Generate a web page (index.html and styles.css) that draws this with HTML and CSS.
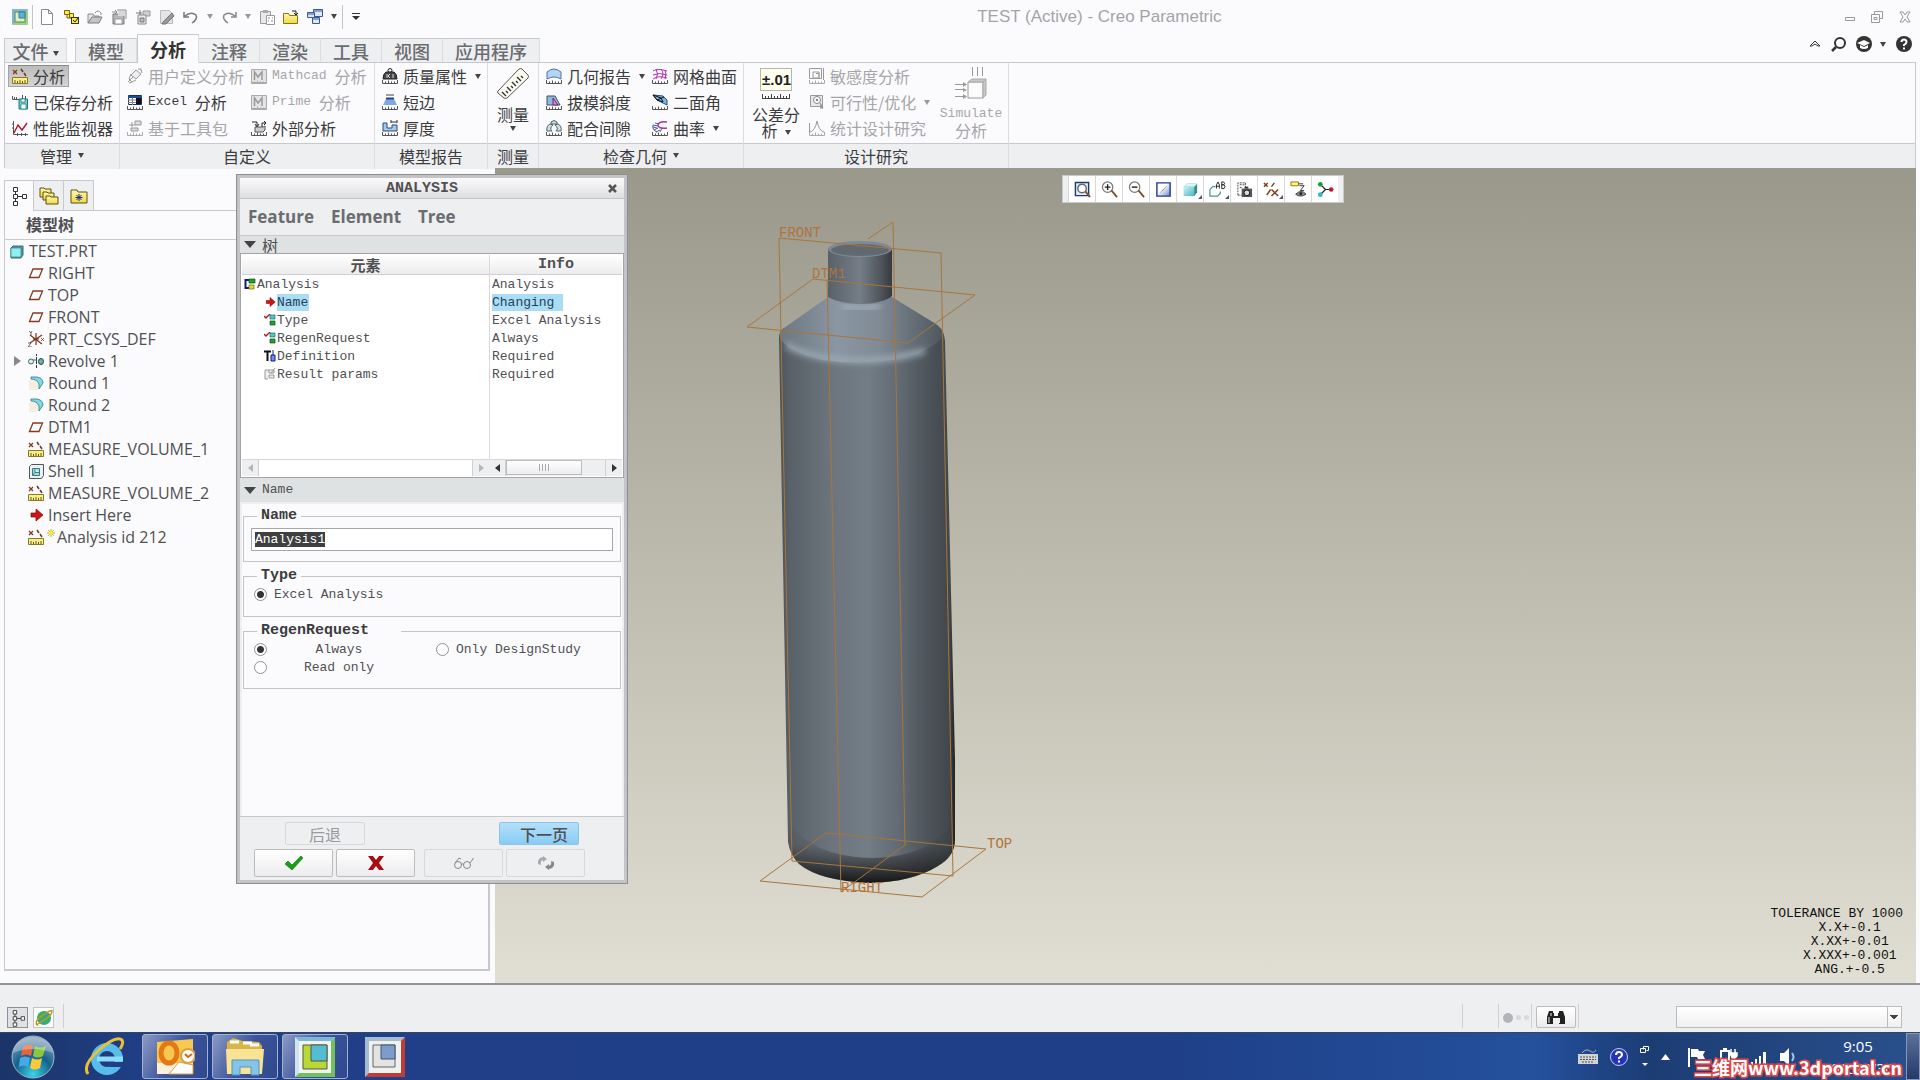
FILE: index.html
```html
<!DOCTYPE html>
<html lang="zh-CN">
<head>
    <meta charset="UTF-8">
    <meta name="viewport" content="width=device-width, initial-scale=1.0">
    <title>TEST (Active) - Creo Parametric</title>
    <link rel="stylesheet" href="styles.css">
</head>
<body>

    <!-- icons -->
    <svg class="sprite" aria-hidden="true">
        <defs>
            <linearGradient id="g-cyan" x1="0" y1="0" x2="1" y2="1"><stop offset="0" stop-color="#c8f4f8"/><stop offset="1" stop-color="#4fb4c0"/></linearGradient>
            <linearGradient id="g-folder" x1="0" y1="0" x2="0" y2="1"><stop offset="0" stop-color="#fff7b0"/><stop offset="1" stop-color="#f0d84c"/></linearGradient>
            <linearGradient id="g-doc" x1="0" y1="0" x2="1" y2="1"><stop offset="0.4" stop-color="#fff"/><stop offset="1" stop-color="#6c86c8"/></linearGradient>
        </defs>
        <symbol id="ticks" viewBox="0 0 16 16"><path d="M.5 12v3.500h15V12M3.500 13.500v2M6.500 12.500v3M9.500 13.500v2M12.500 13.500v2" fill="none" stroke="currentColor"/></symbol>
        <symbol id="i-app" viewBox="0 0 16 16"><rect width="16" height="16" rx="1" fill="#9ccf8c"/><path d="M0 0h16L0 16z" fill="#7fb6dc"/><rect x="3" y="3" width="10" height="10" fill="#dff0c0" stroke="#5c8a4c"/><path d="M7 3h6v6H7z" fill="#58b4d4" stroke="#3c7c94"/></symbol>
        <symbol id="i-new" viewBox="0 0 16 16"><path d="M2.500.5h7l4 4v11h-11zM9.500.5v4h4" fill="#fff" stroke="#8a8a8a"/></symbol>
        <symbol id="i-opensel" viewBox="0 0 16 16"><path d="M1.500 1.500h5v4h-5zM4 5.500V9h4" fill="#ffec4c" stroke="#786400"/><path d="M6.500 4.500h4v4h-4z" fill="#ffec4c" stroke="#786400"/><rect x="8.500" y="8.500" width="7" height="6" fill="#ffe74a" stroke="#333"/><path d="M10 11l2 2 3-4" fill="none" stroke="#222"/></symbol>
        <symbol id="i-open" viewBox="0 0 16 16"><path d="M1 14V5h5l1 2h5v2" fill="#e4e4e4" stroke="#8c8c8c"/><path d="M1 14l4-6h10l-3 6z" fill="#c4c4c4" stroke="#7c7c7c"/><path d="M8 4q3-4 6 0v2" fill="none" stroke="#8c8c8c"/></symbol>
        <symbol id="i-save" viewBox="0 0 16 16"><path d="M2 5h11v10H2z" fill="#b8b8b8" stroke="#777"/><path d="M4 10h7v5H4z" fill="#fff" stroke="#999"/><path d="M6 1h9v9M1 3h5M4 1l2 2-2 2" fill="none" stroke="#888"/><path d="M7 2h7v5H7z" fill="#d8d8d8"/></symbol>
        <symbol id="i-saveas" viewBox="0 0 16 16"><path d="M8 2h7v5H8z" fill="#d0d0d0" stroke="#999"/><path d="M3 6h8v9H3z" fill="#ececec" stroke="#888"/><path d="M5 9h4v4H5zM1 4h6M5 1v5" fill="#bbb" stroke="#777"/></symbol>
        <symbol id="i-edit" viewBox="0 0 16 16"><path d="M1.500 1.500h9l3 3v10h-12z" fill="#e4e4e4" stroke="#bbb"/><path d="M4 13L13 4l2 3-8 8H3z" fill="#999" stroke="#777"/></symbol>
        <symbol id="i-undo" viewBox="0 0 16 16"><path d="M2 7q6-5 11-1 2 4-4 8M1 3v5h5" fill="none" stroke="#777" stroke-width="1.500"/></symbol>
        <symbol id="i-redo" viewBox="0 0 16 16"><path d="M14 7Q8 2 3 6q-2 4 4 8M15 3v5h-5" fill="none" stroke="#888" stroke-width="1.500"/></symbol>
        <symbol id="i-paste" viewBox="0 0 16 16"><path d="M1.500 2.500h10v12h-10z" fill="#e8e8e8" stroke="#999"/><path d="M4 1h5v3H4z" fill="#aaa"/><path d="M7.500 6.500h8v9h-8z" fill="#fff" stroke="#999"/><path d="M9 9h2m2 0h1m-5 3h1m2 0h2" stroke="#888"/></symbol>
        <symbol id="i-folder" viewBox="0 0 16 16"><path d="M.5 14.500v-10h5l1 2h8v8z" fill="url(#g-folder)" stroke="#8a7600"/><path d="M9 2h4v3M11 4l2 2 2-2" fill="none" stroke="#222"/></symbol>
        <symbol id="i-windows" viewBox="0 0 16 16"><g fill="#dfe8f8" stroke="#345a9a"><path d="M6.500.5h9v7h-9z"/><path d="M.5 3.500h7v5h-7z"/><path d="M5.500 8.500h7v6h-7z"/></g><path d="M6 2h9M1 5h6M6 10h6" stroke="#345a9a"/></symbol>
        <symbol id="i-analysis" viewBox="0 0 16 16"><path d="M1 2l4 4M5 2L1 6" stroke="#8c3818" stroke-width="1.300"/><path d="M9 1l2 3M12 5l2 3" stroke="#6b3a1c" stroke-width="1.500"/><path d="M.5 9.500h15v6H.5z" fill="#f6ee8c" stroke="#8a7a20"/><path d="M3 15v-3M5.500 15v-2M8 15v-3M10.500 15v-2M13 15v-3" stroke="#6b5e14"/></symbol>
        <symbol id="i-saved" viewBox="0 0 16 16"><path d="M.5 2v3.500h7M2.500 3v2M4.500 3v2M10.500 1v4M13.500 2v3" fill="none" stroke="#555"/><path d="M7 5h8.500v10H7z" fill="#6cd0c8" stroke="#1c7a78"/><path d="M9 10h5v5H9zM9 5h4v3H9z" fill="#fff" stroke="#1c7a78" stroke-width=".7"/></symbol>
        <symbol id="i-monitor" viewBox="0 0 16 16"><path d="M1.500 1v13.500H16M0 4h2M0 8h2M5.500 13v3M9.500 13v3M13.500 13v3" fill="none" stroke="#555"/><path d="M2 13L6 5l4 5 5-7" fill="none" stroke="#b4142c" stroke-width="1.400"/></symbol>
        <symbol id="i-userdef" viewBox="0 0 16 16"><path d="M4 7l5-5 5 4-5 5zM11 1h3l1 4" fill="#eee" stroke="#999"/><path d="M4 6l-2 5 3 3 4-2M1 14l5-5M2 15l3-1" fill="none" stroke="#999"/></symbol>
        <symbol id="i-excel" viewBox="0 0 16 16"><path d="M1.500 1.500h13v9h-13z" fill="#fff" stroke="#1c2c54"/><path d="M1 2h14v2H1z" fill="#1c4c9c"/><path d="M1 6h8M1 8.500h8M5.500 4v7" stroke="#888"/><path d="M9 4h5v6H9z" fill="#111"/><use href="#ticks"/></symbol>
        <symbol id="i-toolkit" viewBox="0 0 16 16"><path d="M2 5h6M5 2v5M8 1h6v4H8zM4 8h7v3H4z" fill="#ddd" stroke="#999"/><use href="#ticks"/></symbol>
        <symbol id="i-mathcad" viewBox="0 0 16 16"><path d="M.5 1.500h15v13H.5z" fill="#e4e4e4" stroke="#aaa"/><path d="M3.500 12V4L7 9l4-5v8" fill="none" stroke="#999" stroke-width="1.500"/><use href="#ticks"/></symbol>
        <symbol id="i-external" viewBox="0 0 16 16"><path d="M1 2h5v4M4 4l2 3 2-3M11 7V3h4M13 1l2 2-2 2" fill="none" stroke="#222"/><path d="M4 7h8l2-1v4l-2 2H4z" fill="#ccc" stroke="#555"/><use href="#ticks"/></symbol>
        <symbol id="i-mass" viewBox="0 0 16 16"><circle cx="8" cy="2.500" r="2" fill="none" stroke="#222"/><path d="M4 4h8q3 2 3 7H1q0-5 3-7z" fill="#444" stroke="#222"/><path d="M5 6v4M8 6L6 8l2 2M11 6v4" stroke="#ddd" fill="none"/><use href="#ticks"/></symbol>
        <symbol id="i-shortedge" viewBox="0 0 16 16"><path d="M4 5h8l3 6H1z" fill="#7ea8dc"/><path d="M4 4.500h8" stroke="#2244a4" stroke-width="2"/><path d="M4 1h8" stroke="#444"/><use href="#ticks"/></symbol>
        <symbol id="i-thick" viewBox="0 0 16 16"><path d="M1 3h4v5h5V5h5v6H1z" fill="#a8c8e8" stroke="#2c4a7c"/><path d="M9 2h6M9 0v3M15 0v3" stroke="#333"/><use href="#ticks"/></symbol>
        <symbol id="i-measure" viewBox="0 0 32 32"><path d="M1 24L22 2q2-1 3 0l6 6q1 2 0 3L10 31q-2 1-3 0l-6-5q-1-1 0-2z" fill="#fbfbf2" stroke="#555"/><path d="M9 29l-4-4M11 26l-2-2M14 24l-4-4M16 21l-2-2M19 19l-4-4M21 16l-2-2M24 14l-4-4M26 11l-2-2" stroke="#333" stroke-width="1.400"/></symbol>
        <symbol id="i-georeport" viewBox="0 0 16 16"><path d="M1 11V4q7-6 14 0v7q-7-4-14 0z" fill="#b4d4f4" stroke="#5470a4"/><use href="#ticks"/></symbol>
        <symbol id="i-draft" viewBox="0 0 16 16"><path d="M1 2h8l5 9H1z" fill="#94b8dc" stroke="#34507c"/><path d="M7 4l5 7H7z" fill="#e87ad0" stroke="#702a64"/><use href="#ticks"/></symbol>
        <symbol id="i-clear" viewBox="0 0 16 16"><path d="M5 2q3-3 6 0v2H5zM4 4q-4 2-3 7h5q-3-3 1-6zM12 4q4 2 3 7h-5q3-3-1-6z" fill="#cfe0e4" stroke="#4c6468"/><use href="#ticks"/></symbol>
        <symbol id="i-mesh" viewBox="0 0 16 16"><path d="M1 3q5-3 14 0M1 7q6-3 14 0M1 11q5-4 14-1M4 1q3 5 0 10M9 1q4 5 0 10M13 2q2 4 0 9" fill="none" stroke="#b030b0"/><use href="#ticks"/></symbol>
        <symbol id="i-dihedral" viewBox="0 0 16 16"><path d="M1 1l10 1 4 4v5L5 6z" fill="#7cb4e4" stroke="#2c4c7c"/><path d="M1 1l8 3 2 4-6-2zM5 6l7-3" stroke="#111" fill="none"/><use href="#ticks"/></symbol>
        <symbol id="i-curv" viewBox="0 0 16 16"><path d="M15 2q-8-1-9 3 0 4 9 3" fill="none" stroke="#b030a0" stroke-width="1.400"/><path d="M1 5l5 1M2 10l4-2M4 12l4-2M3 3l4 1M8 12l2-4M1 7l4 1M1 5q-1 5 4 7" fill="none" stroke="#4c5c94"/><use href="#ticks"/></symbol>
        <symbol id="i-sens" viewBox="0 0 16 16"><path d="M.5.5h12v10H.5zM4 4h6v6H4zM7 5.500h3v4M14.500 0v12" fill="none" stroke="#999"/><use href="#ticks"/></symbol>
        <symbol id="i-feas" viewBox="0 0 16 16"><path d="M1.500 1.500h12v11h-12z" fill="#e8e8e8" stroke="#999"/><circle cx="8" cy="6" r="3.500" fill="#fff" stroke="#888"/><circle cx="8" cy="6" r="1.300" fill="#888"/><path d="M11 9l3 5h-3" stroke="#888" fill="#aaa"/></symbol>
        <symbol id="i-stat" viewBox="0 0 16 16"><path d="M1 12Q6 11 8 1q2 10 7 11M.5 3v12" fill="none" stroke="#999"/><use href="#ticks"/></symbol>
        <symbol id="i-sim" viewBox="0 0 32 32"><path d="M13 15h15v16H13z" fill="#fbfbfb" stroke="#999"/><path d="M13 15l4-3h14l-3 3zM28 15l3-3v16l-3 3z" fill="#c8c8c8" stroke="#aaa"/><path d="M17.500 0v9M22.500 0v9M27.500 0v9M0 17.500h9M0 22.500h9M0 29.500h9" stroke="#999"/><path d="M8 15l4 2.500L8 20zM8 21l4 2-4 2zM8 27l4 2.500L8 32z" fill="#999"/></symbol>

        <symbol id="i-tree" viewBox="0 0 16 20"><path d="M2.500 1.500h4v4h-4zM2.500 8.500h4v4h-4zM2.500 15.500h4v4h-4zM11.500 8.500h4v4h-4zM4.500 5.500v3M4.500 12.500v3M6.500 10.500h5" fill="#fff" stroke="#333"/></symbol>
        <symbol id="i-folders" viewBox="0 0 20 20"><g fill="url(#g-folder)" stroke="#5c5410"><path d="M1 11V2h4l1 1h6v8z"/><path d="M4 14V6h4l1 1h6v7z"/><path d="M7 18V10h4l1 1h7v7z"/></g></symbol>
        <symbol id="i-favs" viewBox="0 0 20 20"><path d="M2 17V4h6l1 2h9v11z" fill="url(#g-folder)" stroke="#5c5410"/><path d="M10 8v7M6.500 11.500h7M7.500 9l5 5M12.500 9l-5 5" stroke="#142a6c"/></symbol>
        <symbol id="i-part" viewBox="0 0 16 16"><path d="M2 5l2-2h10v9l-2 3H2z" fill="#4f9aa4" stroke="#3c6c74"/><path d="M2 5h10v9H2z" fill="#8ff0f4" stroke="#3c7c84" stroke-width=".7"/></symbol>
        <symbol id="i-plane" viewBox="0 0 16 16"><path d="M1.500 12.500L5 4h9.500L11 12.500z" fill="none" stroke="#843c20" stroke-width="1.300"/></symbol>
        <symbol id="i-csys" viewBox="0 0 16 16"><path d="M8 2v12M2 4l12 9M2 12l12-8M5 8h6" stroke="#7c3418" stroke-width="1.200"/><path d="M1 0l2 2 1-2M3 2v2M13 7l3 3M16 7l-3 3M0 12h3l-3 4h4" fill="none" stroke="#444" stroke-width=".8"/></symbol>
        <symbol id="i-revolve" viewBox="0 0 16 16"><path d="M8.500 1v2M8.500 4v7M8.500 12v3" stroke="#333"/><circle cx="3" cy="8.500" r="2.500" fill="#d4f0f0" stroke="#466"/><ellipse cx="13" cy="8.500" rx="2.500" ry="3" fill="#6cb4b4" stroke="#244"/><path d="M5 7h4" stroke="#466"/></symbol>
        <symbol id="i-round" viewBox="0 0 16 16"><path d="M1 5h9v10H1z" fill="#f4efe2"/><path d="M3 2h6q6 1 6 6l-4 6v-5Q9 4 3 4z" fill="#7cdce4" stroke="#4c8c94"/></symbol>
        <symbol id="i-shell" viewBox="0 0 16 16"><path d="M1.500 3.500l2-2h12v11l-2 3h-12z" fill="#e8f4f4" stroke="#555"/><path d="M4.500 5.500h7v7h-7zM7 5.500v4h4.500M4.500 12.500L7 9.500" fill="#9ce0e4" stroke="#46787c"/></symbol>
        <symbol id="i-insert" viewBox="0 0 16 16"><path d="M3 6h5V2l7 6-7 6v-4H3z" fill="#d01414" stroke="#7c0808" stroke-width=".7"/></symbol>
        <symbol id="i-star" viewBox="0 0 10 10"><path d="M5 0v10M0 5h10M1.500 1.500l7 7M8.500 1.500l-7 7" stroke="#a09a10"/><circle cx="5" cy="5" r="2.500" fill="#ffee20"/></symbol>

        <symbol id="i-el-root" viewBox="0 0 12 12"><path d="M5 2H1.500v8H5" fill="none" stroke="#111a70" stroke-width="2"/><path d="M5 1h6v4H5z" fill="#20a030" stroke="#0c5018" stroke-width=".7"/><path d="M5 7h5v4H5z" fill="#e8dc20" stroke="#6c6410" stroke-width=".7"/></symbol>
        <symbol id="i-el-ok" viewBox="0 0 12 12"><path d="M0 2l2 2 4-4" fill="none" stroke="#a02020" stroke-width="1.400"/><path d="M6 1h5v4H6z" fill="#50c8c8" stroke="#107070" stroke-width=".7"/><path d="M6 7h5v4H6z" fill="#20a030" stroke="#0c5018" stroke-width=".7"/></symbol>
        <symbol id="i-el-def" viewBox="0 0 12 12"><path d="M0 1.500h7M3.500 1v10" stroke="#111" stroke-width="2" fill="none"/><path d="M7 5h4v6H7zM9 0v5" fill="#7090e8" stroke="#101c8c"/></symbol>
        <symbol id="i-el-res" viewBox="0 0 12 12"><path d="M5 2H1v9h3M5 2h5v3H5zM5 7h5v3H5zM7 5l4-5" fill="#eee" stroke="#999"/></symbol>
        <symbol id="i-check" viewBox="0 0 18 14"><path d="M0 8l3-3 4 4 9-9 2 2L7 14z" fill="#16a016" stroke="#0c6c10" stroke-width=".6"/></symbol>
        <symbol id="i-cross" viewBox="0 0 18 14"><path d="M1 0h5l3 4 3-4h5l-5 7 5 7h-5l-3-4-3 4H1l5-7z" fill="#a80c14"/></symbol>
        <symbol id="i-glasses" viewBox="0 0 20 12"><g fill="none" stroke="#888"><circle cx="4" cy="8" r="3.500"/><circle cx="13" cy="8" r="3.500"/><path d="M7.500 7h2M1 6l4-5 2 1M16 6l3-4v-1"/></g></symbol>
        <symbol id="i-cycle" viewBox="0 0 18 14"><path d="M1 8Q0 2 6 1V0l4 3-4 3V4Q3 5 4 9z" fill="#aaa"/><path d="M17 6q1 6-5 7v1l-4-3 4-3v2q3-1 2-5z" fill="#888"/></symbol>

        <symbol id="v-refit" viewBox="0 0 18 18"><path d="M1.500 1.500h14v14h-14z" fill="#e4ecf8" stroke="#1c3c74" stroke-width="1.500"/><circle cx="8.500" cy="8" r="4.500" fill="#fff" stroke="#666" stroke-width="1.500"/><path d="M12 11l5 6" stroke="#7c5030" stroke-width="2"/></symbol>
        <symbol id="v-in" viewBox="0 0 18 18"><circle cx="7" cy="6.500" r="5.500" fill="#fff" stroke="#777" stroke-width="1.300"/><path d="M4 6.500h6M7 3.500v6" stroke="#222" stroke-width="1.500"/><path d="M11 10l6 7" stroke="#7c5030" stroke-width="2"/></symbol>
        <symbol id="v-out" viewBox="0 0 18 18"><circle cx="7" cy="6.500" r="5.500" fill="#fff" stroke="#777" stroke-width="1.300"/><path d="M4 6.500h6" stroke="#222" stroke-width="1.500"/><path d="M11 10l6 7" stroke="#7c5030" stroke-width="2"/></symbol>
        <symbol id="v-repaint" viewBox="0 0 18 18"><path d="M2 2h14v14H2z" fill="url(#g-doc)" stroke="#1c3c8c" stroke-width="1.500"/><path d="M6 12l6-6" stroke="#446" stroke-dasharray="1 1"/></symbol>
        <symbol id="v-shade" viewBox="0 0 18 18"><path d="M2 6l3-3h11v9l-3 4H2z" fill="#3c8c94"/><path d="M2 6h11v10H2z" fill="url(#g-cyan)"/><path d="M2 6l3-3h11l-3 3z" fill="#d4f8fa"/></symbol>
        <symbol id="v-views" viewBox="0 0 18 18"><path d="M1 9l3-3h3M1 9v7h8l3-3v-2" fill="none" stroke="#4c9494" stroke-width="1.300"/><path d="M8 8V4l1.500-3L11 4v4M8 5.500h3M13.500 8V1h2q2 1.500 0 3h-2 2.500q2 2 0 4z" fill="none" stroke="#222"/></symbol>
        <symbol id="v-manager" viewBox="0 0 18 18"><path d="M2 15V2h8v5M4 4h5M4 7h3M2 15h4" stroke="#444" stroke-dasharray="2 1" fill="none"/><path d="M6 8h11v9H6z" fill="#555"/><path d="M9 6h4v2H9z" fill="#333"/><circle cx="11.500" cy="12.500" r="3" fill="#ddd" stroke="#111"/></symbol>
        <symbol id="v-datum" viewBox="0 0 18 18"><path d="M1 2l4 4M5 2L1 6M9 9l7 7M16 9l-7 7M4 15l4-6M9 6l3-4" stroke="#7c3c1c" stroke-width="1.500"/></symbol>
        <symbol id="v-annot" viewBox="0 0 18 18"><path d="M1 1h8v4H1z" fill="#fff47a" stroke="#887a10"/><path d="M9 3h5M10 5h5l-4 5h4" stroke="#333" fill="none"/><path d="M6 14q6-6 11 0-6 4-11 0z" fill="#888" stroke="#444"/><circle cx="11.500" cy="13.500" r="1.500" fill="#222"/></symbol>
        <symbol id="v-spin" viewBox="0 0 18 18"><path d="M3 3l6 6-5 5M9 9h5" stroke="#222" stroke-width="1.300" fill="none"/><circle cx="3.500" cy="3.500" r="2.500" fill="#1c9c38"/><circle cx="3.500" cy="14.500" r="2.500" fill="#38b4c4"/><circle cx="15" cy="9" r="2.500" fill="#c41830"/></symbol>
    </svg>

    <header class="titlebar">
        <div class="quick-access">
            <svg class="icon app-icon"><use href="#i-app"/></svg>
            <button class="quick first" title="新建"><svg class="icon"><use href="#i-new"/></svg></button>
            <button class="quick" title="选择性打开"><svg class="icon"><use href="#i-opensel"/></svg></button>
            <button class="quick" title="打开"><svg class="icon"><use href="#i-open"/></svg></button>
            <button class="quick" title="保存"><svg class="icon"><use href="#i-save"/></svg></button>
            <button class="quick" title="另存为"><svg class="icon"><use href="#i-saveas"/></svg></button>
            <button class="quick" title="编辑"><svg class="icon"><use href="#i-edit"/></svg></button>
            <button class="quick wide" title="撤消"><svg class="icon"><use href="#i-undo"/></svg><i class="caret dim"></i></button>
            <button class="quick wide" title="重做"><svg class="icon"><use href="#i-redo"/></svg><i class="caret dim"></i></button>
            <button class="quick" title="粘贴"><svg class="icon"><use href="#i-paste"/></svg></button>
            <button class="quick" title="关闭"><svg class="icon"><use href="#i-folder"/></svg></button>
            <button class="quick wide" title="窗口"><svg class="icon"><use href="#i-windows"/></svg><i class="caret"></i></button>
            <button class="quick customize" title="自定义"><svg width="8" height="8" viewBox="0 0 8 8"><path d="M0 .5h8" stroke="#333"/><path d="M0 3h8L4 7z" fill="#333"/></svg></button>
        </div>
        <h1>TEST (Active) - Creo Parametric</h1>
        <div class="window-buttons">
            <button title="最小化"><svg width="10" height="16" viewBox="0 0 10 16"><path d="M.5 8.500h9v3h-9z" fill="none" stroke="#999"/></svg></button>
            <button title="还原"><svg width="12" height="12" viewBox="0 0 12 12"><path d="M3.500 3.500v-3h8v7h-3M.5 3.500h8v8h-8zM3 6.500h3v2H3z" fill="none" stroke="#999"/></svg></button>
            <button title="关闭"><svg width="12" height="12" viewBox="0 0 12 12"><path d="M1 1h3l2 3 2-3h3L8 6l3 5H8L6 8l-2 3H1l3-5z" fill="none" stroke="#999"/></svg></button>
        </div>
    </header>

    <nav class="tabs">
        <button class="tab file">文件<i class="caret"></i></button>
        <button class="tab">模型</button>
        <button class="tab active">分析</button>
        <button class="tab">注释</button>
        <button class="tab">渲染</button>
        <button class="tab">工具</button>
        <button class="tab">视图</button>
        <button class="tab">应用程序</button>
        <div class="tab-tools">
            <button title="最小化功能区"><svg width="12" height="8" viewBox="0 0 12 8"><path d="M1 6l5-5 5 5H9L6 4 3 6z" fill="none" stroke="#333"/></svg></button>
            <button title="搜索"><svg width="15" height="15" viewBox="0 0 15 15"><circle cx="9" cy="6" r="5" fill="none" stroke="#333" stroke-width="2"/><path d="M5 10l-4 4" stroke="#333" stroke-width="2.500"/></svg></button>
            <button title="学习"><svg width="16" height="16" viewBox="0 0 16 16"><circle cx="8" cy="8" r="8" fill="#333"/><path d="M1 7l7-3 6 3-6 3zM4 9v3q4 2 8 0V9l-4 2z" fill="#fff"/></svg><i class="caret"></i></button>
            <button title="帮助"><svg width="16" height="16" viewBox="0 0 16 16"><circle cx="8" cy="8" r="8" fill="#333"/><path d="M5.500 6q0-2.500 2.500-2.500T10.500 6q0 1.500-2.500 3v1" fill="none" stroke="#fff" stroke-width="2"/><path d="M7 11.500h2v2H7z" fill="#fff"/></svg></button>
        </div>
    </nav>

    <section class="ribbon">
        <div class="group">
            <div class="tools">
                <button class="tool pressed"><svg class="icon"><use href="#i-analysis"/></svg>分析</button>
                <button class="tool"><svg class="icon"><use href="#i-saved"/></svg>已保存分析</button>
                <button class="tool"><svg class="icon"><use href="#i-monitor"/></svg>性能监视器</button>
            </div>
            <div class="group-name">管理<i class="caret"></i></div>
        </div>
        <div class="group">
            <div class="tools">
                <button class="tool" disabled><svg class="icon"><use href="#i-userdef"/></svg>用户定义分析</button>
                <button class="tool"><svg class="icon"><use href="#i-excel"/></svg><span class="latin">Excel </span>分析</button>
                <button class="tool" disabled><svg class="icon"><use href="#i-toolkit"/></svg>基于工具包</button>
                <button class="tool" disabled><svg class="icon"><use href="#i-mathcad"/></svg><span class="latin">Mathcad </span>分析</button>
                <button class="tool" disabled><svg class="icon"><use href="#i-mathcad"/></svg><span class="latin">Prime </span>分析</button>
                <button class="tool"><svg class="icon"><use href="#i-external"/></svg>外部分析</button>
            </div>
            <div class="group-name">自定义</div>
        </div>
        <div class="group">
            <div class="tools">
                <button class="tool"><svg class="icon"><use href="#i-mass"/></svg>质量属性<i class="caret"></i></button>
                <button class="tool"><svg class="icon"><use href="#i-shortedge"/></svg>短边</button>
                <button class="tool"><svg class="icon"><use href="#i-thick"/></svg>厚度</button>
            </div>
            <div class="group-name">模型报告</div>
        </div>
        <div class="group">
            <div class="big-tools">
                <button class="big-tool"><svg class="icon-big"><use href="#i-measure"/></svg><span>测量</span><i class="caret"></i></button>
            </div>
            <div class="group-name">测量</div>
        </div>
        <div class="group">
            <div class="tools geometry">
                <button class="tool"><svg class="icon"><use href="#i-georeport"/></svg>几何报告<i class="caret"></i></button>
                <button class="tool"><svg class="icon"><use href="#i-draft"/></svg>拔模斜度</button>
                <button class="tool"><svg class="icon"><use href="#i-clear"/></svg>配合间隙</button>
                <button class="tool"><svg class="icon"><use href="#i-mesh"/></svg>网格曲面</button>
                <button class="tool"><svg class="icon"><use href="#i-dihedral"/></svg>二面角</button>
                <button class="tool"><svg class="icon"><use href="#i-curv"/></svg>曲率<i class="caret"></i></button>
            </div>
            <div class="group-name">检查几何<i class="caret"></i></div>
        </div>
        <div class="group">
            <div class="big-tools study">
                <button class="big-tool">
                    <svg class="icon-big" viewBox="0 0 32 32"><rect x=".5" y="1.500" width="31" height="22" fill="#fffff0" stroke="#b8b8a0"/><path d="M2 31.500h28M2.500 27v4M5.500 29v2M8.500 29v2M11.500 27v4M14.500 29v2M17.500 29v2M20.500 27v4M23.500 29v2M26.500 29v2M29.500 27v4" stroke="#444"/><text x="2" y="18" class="tol-text">±.01</text></svg>
                    <span>公差分</span><span>析<i class="caret"></i></span>
                </button>
                <div class="tools">
                    <button class="tool" disabled><svg class="icon"><use href="#i-sens"/></svg>敏感度分析</button>
                    <button class="tool" disabled><svg class="icon"><use href="#i-feas"/></svg>可行性/优化<i class="caret"></i></button>
                    <button class="tool" disabled><svg class="icon"><use href="#i-stat"/></svg>统计设计研究</button>
                </div>
                <button class="big-tool" disabled><svg class="icon-big"><use href="#i-sim"/></svg><span class="latin">Simulate</span><span>分析</span></button>
            </div>
            <div class="group-name">设计研究</div>
        </div>
        <div class="group">
            <div class="tools"></div>
            <div class="group-name"></div>
        </div>
    </section>

    <main class="workspace">
        <aside class="navigator">
            <div class="nav-tabs">
                <button class="nav-tab active" title="模型树"><svg width="16" height="20"><use href="#i-tree"/></svg></button>
                <button class="nav-tab" title="文件夹浏览器"><svg width="20" height="20"><use href="#i-folders"/></svg></button>
                <button class="nav-tab" title="收藏夹"><svg width="20" height="20"><use href="#i-favs"/></svg></button>
            </div>
            <div class="nav-panel">
                <h2>模型树</h2>
                <ul class="tree">
                    <li class="root"><svg class="icon"><use href="#i-part"/></svg>TEST.PRT</li>
                    <li><svg class="icon"><use href="#i-plane"/></svg>RIGHT</li>
                    <li><svg class="icon"><use href="#i-plane"/></svg>TOP</li>
                    <li><svg class="icon"><use href="#i-plane"/></svg>FRONT</li>
                    <li><svg class="icon"><use href="#i-csys"/></svg>PRT_CSYS_DEF</li>
                    <li class="closed"><svg class="icon"><use href="#i-revolve"/></svg>Revolve 1</li>
                    <li><svg class="icon"><use href="#i-round"/></svg>Round 1</li>
                    <li><svg class="icon"><use href="#i-round"/></svg>Round 2</li>
                    <li><svg class="icon"><use href="#i-plane"/></svg>DTM1</li>
                    <li><svg class="icon"><use href="#i-analysis"/></svg>MEASURE_VOLUME_1</li>
                    <li><svg class="icon"><use href="#i-shell"/></svg>Shell 1</li>
                    <li><svg class="icon"><use href="#i-analysis"/></svg>MEASURE_VOLUME_2</li>
                    <li><svg class="icon"><use href="#i-insert"/></svg>Insert Here</li>
                    <li><svg class="icon"><use href="#i-analysis"/></svg><svg class="star"><use href="#i-star"/></svg>Analysis id 212</li>
                </ul>
            </div>
        </aside>

        <div class="graphics">
            <svg class="model" viewBox="740 210 300 700">
                <defs>
                    <linearGradient id="body" x1="0" x2="1" y1="0" y2="0">
                        <stop offset="0" stop-color="#4c5359"/><stop offset=".06" stop-color="#596168"/><stop offset=".3" stop-color="#6c757d"/><stop offset=".5" stop-color="#737d85"/><stop offset=".68" stop-color="#626b73"/><stop offset=".85" stop-color="#4c5359"/><stop offset=".97" stop-color="#41474b"/><stop offset="1" stop-color="#202020"/>
                    </linearGradient>
                    <linearGradient id="neck" x1="0" x2="1" y1="0" y2="0">
                        <stop offset="0" stop-color="#596168"/><stop offset=".5" stop-color="#747e88"/><stop offset=".85" stop-color="#4c5257"/><stop offset="1" stop-color="#353a3e"/>
                    </linearGradient>
                    <linearGradient id="shoulder" x1="0" x2="1" y1="0" y2="0">
                        <stop offset="0" stop-color="#6c7780"/><stop offset=".35" stop-color="#8a96a2"/><stop offset=".6" stop-color="#808b96"/><stop offset="1" stop-color="#4f575e"/>
                    </linearGradient>
                    <linearGradient id="base" x1="0" x2="0" y1="0" y2="1">
                        <stop offset="0" stop-color="#1c1c1c" stop-opacity="0"/><stop offset=".4" stop-color="#1c1c1c" stop-opacity=".1"/><stop offset=".75" stop-color="#181818" stop-opacity=".6"/><stop offset="1" stop-color="#101010" stop-opacity=".95"/>
                    </linearGradient>
                    <filter id="soft" x="-20%" y="-60%" width="140%" height="220%"><feGaussianBlur stdDeviation="3"/></filter>
                </defs>
                <path d="M779 338Q779 331 784 328H940Q944 331 945 341L955 760V840Q955 856 938 866 912 882 870 883 820 881 799 864 790 855 788 842z" fill="url(#body)"/>
                <path d="M788 820V842Q790 855 799 864 820 881 870 883 912 882 938 866 955 856 955 840V820Q930 858 870 858 810 856 788 820z" fill="url(#base)"/>
                <path d="M828 297L784 328Q778 333 781 340 790 352 822 360 862 366 905 358 937 348 943 335 942 328 936 324L892 297z" fill="url(#shoulder)"/>
                <path d="M786 345Q806 357 845 360T925 351" fill="none" stroke="#9fadb9" stroke-width="5" filter="url(#soft)"/>
                <path d="M828 249V297Q838 303 860 304 884 303 892 296V249z" fill="url(#neck)"/>
                <path d="M842 306q18 5 38 0" fill="none" stroke="#a9b7c3" stroke-width="4" filter="url(#soft)"/>
                <ellipse cx="860" cy="249" rx="32" ry="8" fill="#7f8994"/>
                <ellipse cx="860" cy="250" rx="29" ry="6" fill="#616970"/>
                <g class="datum">
                    <path d="M779 238L941 253L953 876L792 861z"/>
                    <path d="M868 239L893 222L905 845L841 892L827 279"/>
                    <path d="M813 279L975 295L908 343L747 327z"/>
                    <path d="M826 833L986 849L922 897L760 881z"/>
                </g>
                <g class="datum-name">
                    <text x="779" y="237">FRONT</text>
                    <text x="812" y="278">DTM1</text>
                    <text x="987" y="848">TOP</text>
                    <text x="841" y="892">RIGHT</text>
                </g>
            </svg>

            <div class="view-bar">
                <button title="重新调整"><svg><use href="#v-refit"/></svg></button>
                <button title="放大"><svg><use href="#v-in"/></svg></button>
                <button title="缩小"><svg><use href="#v-out"/></svg></button>
                <button title="重画"><svg><use href="#v-repaint"/></svg></button>
                <button title="显示样式" class="more"><svg><use href="#v-shade"/></svg></button>
                <button title="已命名视图" class="more"><svg><use href="#v-views"/></svg></button>
                <button title="视图管理器"><svg><use href="#v-manager"/></svg></button>
                <button title="基准显示" class="more"><svg><use href="#v-datum"/></svg></button>
                <button title="注释显示"><svg><use href="#v-annot"/></svg></button>
                <button title="旋转中心"><svg><use href="#v-spin"/></svg></button>
            </div>

            <div class="tolerance">
                <p>TOLERANCE BY 1000</p>
                <p>X.X+-0.1</p>
                <p>X.XX+-0.01</p>
                <p>X.XXX+-0.001</p>
                <p>ANG.+-0.5</p>
            </div>
        </div>

        <form class="dialog" onsubmit="return false">
            <div class="dialog-title"><span>ANALYSIS</span><button type="button" class="close" title="关闭"><svg width="9" height="9" viewBox="0 0 9 9"><path d="M1 1l7 7M8 1L1 8" stroke="#555" stroke-width="2.500"/></svg></button></div>
            <div class="dialog-menu">
                <button type="button">Feature</button>
                <button type="button">Element</button>
                <button type="button">Tree</button>
            </div>
            <div class="section-title"><i class="fold"></i><span class="han">树</span></div>
            <div class="elements">
                <table>
                    <thead>
                        <tr><th class="han">元素</th><th>Info</th></tr>
                    </thead>
                    <tbody>
                        <tr><td class="top"><svg><use href="#i-el-root"/></svg>Analysis</td><td>Analysis</td></tr>
                        <tr><td><svg><use href="#i-insert"/></svg><mark>Name</mark></td><td><mark class="long">Changing</mark></td></tr>
                        <tr><td><svg><use href="#i-el-ok"/></svg>Type</td><td>Excel Analysis</td></tr>
                        <tr><td><svg><use href="#i-el-ok"/></svg>RegenRequest</td><td>Always</td></tr>
                        <tr><td><svg><use href="#i-el-def"/></svg>Definition</td><td>Required</td></tr>
                        <tr><td><svg><use href="#i-el-res"/></svg>Result params</td><td>Required</td></tr>
                        <tr class="rest"><td></td><td></td></tr>
                    </tbody>
                </table>
                <div class="scrollbars">
                    <div class="scroll off"><i class="arrow left"></i><span class="track"></span><i class="arrow right"></i></div>
                    <div class="scroll"><i class="arrow left"></i><span class="track"><span class="thumb"></span></span><i class="arrow right"></i></div>
                </div>
            </div>
            <div class="section-title second"><i class="fold"></i>Name</div>
            <div class="dialog-body">
                <fieldset class="name-box">
                    <legend><label for="analysis-name">Name</label></legend>
                    <input type="text" id="analysis-name" value="Analysis1">
                </fieldset>
                <fieldset class="type-box">
                    <legend>Type</legend>
                    <label class="option"><input type="radio" name="type" checked>Excel Analysis</label>
                </fieldset>
                <fieldset class="regen-box">
                    <legend class="wide">RegenRequest</legend>
                    <label class="option"><input type="radio" name="regen" checked><span>Always</span></label>
                    <label class="option"><input type="radio" name="regen">Only DesignStudy</label>
                    <label class="option"><input type="radio" name="regen"><span>Read only</span></label>
                </fieldset>
            </div>
            <div class="dialog-footer">
                <div class="steps">
                    <button type="button" class="btn" disabled>后退</button>
                    <button type="button" class="btn next">下一页</button>
                </div>
                <div class="actions">
                    <button type="button" class="btn" title="确定"><svg width="18" height="14"><use href="#i-check"/></svg></button>
                    <button type="button" class="btn" title="取消"><svg width="18" height="14"><use href="#i-cross"/></svg></button>
                    <button type="button" class="btn apart" title="预览" disabled><svg width="20" height="12"><use href="#i-glasses"/></svg></button>
                    <button type="button" class="btn" title="刷新" disabled><svg width="18" height="14"><use href="#i-cycle"/></svg></button>
                </div>
            </div>
        </form>
    </main>

    <footer class="statusbar">
        <button class="status-icon on" title="导航器"><svg width="14" height="18"><use href="#i-tree"/></svg></button>
        <button class="status-icon" title="浏览器"><svg width="18" height="18" viewBox="0 0 18 18"><circle cx="9" cy="9" r="7" fill="#2ca4a4"/><path d="M4 4q4-2 6 2l-4 5-4-2zM10 10l5-3q1 6-4 8z" fill="#3cb44c"/><path d="M2 16Q-1 12 8 6T17 2q0 4-8 9T2 16z" fill="none" stroke="#c09a18" stroke-width="1.500"/></svg></button>
        <i class="sep"></i>
        <div class="status-right">
            <i class="sep"></i>
            <i class="sep gap"></i>
            <span class="lights"><i></i><i></i><i></i></span>
            <i class="sep"></i>
            <button class="btn find" title="查找"><svg width="18" height="16" viewBox="0 0 18 16"><path d="M2 2h4v2h1v3h4V4h1V2h4l2 6v7h-6v-6H6v6H0V8z" fill="#222"/><path d="M2 8v6M12.500 9v5M4 4v3" stroke="#eee"/></svg></button>
            <i class="sep"></i>
            <select class="filter" title="过滤器"><option></option></select>
        </div>
    </footer>

    <footer class="taskbar">
        <button class="task start" title="开始">
            <svg width="44" height="44" viewBox="0 0 44 44">
                <defs><radialGradient id="orb" cx=".5" cy=".9" r=".9"><stop offset="0" stop-color="#38d4e8"/><stop offset=".5" stop-color="#14608c"/><stop offset="1" stop-color="#8ca4bc"/></radialGradient></defs>
                <circle cx="22" cy="22" r="21" fill="url(#orb)" stroke="#9cb8cc"/>
                <path d="M12 12q5-4 10-1l-2 10q-5-3-10 0z" fill="#e8643c"/><path d="M24 11q5 3 11 0l-3 10q-5 3-10 0z" fill="#8cc63c"/><path d="M9 23q5-3 10 0l-2 9q-4-3-9 0z" fill="#4ca8e4"/><path d="M21 23q5 3 10 0l-2 10q-5 3-10 0z" fill="#fcc83c"/>
                <path d="M2 18Q4 3 22 2q18 1 20 16-20-8-40 0z" fill="#fff" opacity=".3"/>
            </svg>
        </button>
        <button class="task" title="Internet Explorer">
            <svg width="40" height="40" viewBox="0 0 40 40">
                <circle cx="22" cy="22" r="12" fill="none" stroke="#58bcec" stroke-width="8"/><path d="M12 22h26" stroke="#8cdcfc" stroke-width="5"/><path d="M24 25h14v5H24z" fill="#203f88"/>
                <path d="M3 37Q-3 28 14 13T37 3q2 3-2 9" fill="none" stroke="#ecc034" stroke-width="3"/>
            </svg>
        </button>
        <button class="task open" title="Outlook">
            <svg width="40" height="40" viewBox="0 0 40 40">
                <path d="M2 5l36-3v35H2z" fill="#f8c850"/><path d="M2 26h36v11H2z" fill="#fbf0dc"/><ellipse cx="14" cy="16" rx="8" ry="10" fill="none" stroke="#e47814" stroke-width="5"/><path d="M14 37l10-12 14 3v9z" fill="#fff" stroke="#dc9c34"/><circle cx="33" cy="19" r="7" fill="#fff" stroke="#dca040" stroke-width="2"/><path d="M30 17l3 3 4-3" fill="none" stroke="#d06414" stroke-width="2"/>
            </svg>
        </button>
        <button class="task open" title="资源管理器">
            <svg width="40" height="40" viewBox="0 0 40 40">
                <path d="M2 5l6-4 10 3 16 1 3 4v27H2z" fill="#d8b44c"/><path d="M5 5h9M18 6h9M25 8h9" stroke="#fff" stroke-width="3"/><path d="M1 12h38l-2 25H2z" fill="#f8e494"/><path d="M7 38V23h27v15h-8v-8H15v8z" fill="#84c4e8" stroke="#5494bc"/>
            </svg>
        </button>
        <button class="task open" title="Creo Parametric">
            <svg width="40" height="40" viewBox="0 0 40 40">
                <path d="M0 0h40v40H0z" fill="#cfe4ec"/><path d="M40 0v40H0L8 32h24V8z" fill="#74c05c"/><path d="M0 0h40l-8 8H8z" fill="#80b4d8"/><path d="M4 4h32v32H4z" fill="#f0f4f0"/><path d="M8 8h24v24H8z" fill="#b8d838" stroke="#505c3c"/><path d="M16 8h16v16H16z" fill="#54bcd4" stroke="#505c3c"/>
            </svg>
        </button>
        <button class="task" title="Creo">
            <svg width="40" height="40" viewBox="0 0 40 40">
                <path d="M0 0h40v40H0z" fill="#a8bcd0"/><path d="M40 0v40H0L8 32h24V8z" fill="#c03c34"/><path d="M4 4h32v32H4z" fill="#f0f0f0"/><path d="M8 8h22v22H8z" fill="#e4e4e4" stroke="#666"/><path d="M16 8h14v14H16z" fill="#7c9ccc" stroke="#456"/>
            </svg>
        </button>
        <div class="tray">
            <svg width="20" height="16" viewBox="0 0 20 16"><path d="M0 5h20v10H0z" fill="#d0d4d8"/><path d="M2 8h16M2 10.500h16M4 13h12" stroke="#555" stroke-dasharray="2 1"/><path d="M4 4q4-5 8-2t6-1" fill="none" stroke="#aab"/></svg>
            <svg width="18" height="18" viewBox="0 0 18 18"><circle cx="9" cy="9" r="8.500" fill="#2434b8" stroke="#c4ccf0"/><path d="M6 7q0-3 3-3t3 3q0 1-3 3v1" fill="none" stroke="#fff" stroke-width="2"/><path d="M8 12.500h2v2H8z" fill="#fff"/></svg>
            <svg width="9" height="22" viewBox="0 0 9 22"><path d="M3.500 3.500v-3h5v4h-2M.5 2.500h5v4h-5z" fill="none" stroke="#fff"/><path d="M2 17h6l-3 3z" fill="#fff"/></svg>
            <svg class="up" width="9" height="6" viewBox="0 0 9 6"><path d="M0 6h9L4.500 0z" fill="#fff"/></svg>
            <svg width="18" height="20" viewBox="0 0 18 20"><path d="M1 1v19" stroke="#fff" stroke-width="2"/><path d="M3 2h7l1 2h6l-2 4 2 4h-7l-1-2H3z" fill="#fff"/></svg>
            <svg width="20" height="20" viewBox="0 0 20 20"><path d="M3 4h8v13H3zM5 2h4" fill="none" stroke="#fff" stroke-width="2"/><path d="M13 2v4M17 2v4M11 6h8v3l-3 3v4" fill="#fff" stroke="#fff" stroke-width="1.500"/></svg>
            <svg width="18" height="18" viewBox="0 0 18 18"><path d="M1 14h2v4H1zM5 11h2v7H5zM9 8h2v10H9zM13 4h3v14h-3z" fill="#fff"/></svg>
            <svg width="18" height="20" viewBox="0 0 18 20"><path d="M0 6h4l5-5v18l-5-5H0z" fill="#fff"/><path d="M12 6q3 4 0 8" fill="none" stroke="#9cc8f4" stroke-width="2"/></svg>
            <div class="clock"><span>9:05</span><span>2013/8/30</span></div>
            <div class="watermark">三维网www.3dportal.cn</div>
        </div>
        <button class="show-desktop" title="显示桌面"></button>
    </footer>

    <script>
        // 打开时选中名称
        const nameInput = document.getElementById('analysis-name');
        nameInput.focus();
        nameInput.select();
    </script>

</body>
</html>
```

FILE: styles.css
```css
* {
    box-sizing: border-box;
}
body {
    margin: 0;
    height: 100vh;
    display: flex;
    flex-direction: column;
    overflow: hidden;
    background-color: #fbfbfd;
    color: #3c3c3e;
    font-family: "Noto Sans CJK SC", sans-serif;
    font-size: 16px;
}
button {
    font: inherit;
    color: inherit;
    background: none;
    border: none;
    padding: 0;
    margin: 0;
    white-space: nowrap;
}
h1, h2, p, ul, fieldset {
    margin: 0;
    padding: 0;
}
svg {
    display: block;
    flex: none;
}
.sprite {
    position: absolute;
    width: 0;
    height: 0;
}
.icon {
    width: 16px;
    height: 16px;
}
.icon-big {
    width: 32px;
    height: 32px;
}
.latin {
    font-family: "Liberation Mono", monospace;
    font-size: 13px;
    white-space: pre;
}
.caret {
    display: inline-block;
    border: 3px solid transparent;
    border-top: 5px solid #444;
    border-bottom: none;
}
.caret.dim {
    border-top-color: #999;
}

/* title bar */
.titlebar {
    display: grid;
    grid-template-columns: 7fr auto 5fr;
    align-items: center;
    height: 33px;
    padding: 0 9px 0 12px;
}
.titlebar h1 {
    font-family: "Liberation Sans", Arial, sans-serif;
    font-size: 17px;
    font-weight: normal;
    color: #a4a4a8;
}
.quick-access {
    display: flex;
    align-items: center;
    width: 0;
}
.app-icon {
    margin-right: 4px;
}
.quick {
    display: flex;
    flex: none;
    align-items: center;
    gap: 8px;
    width: 24px;
    height: 24px;
    padding-left: 3px;
}
.quick.first {
    border-left: 1px solid #c4c4c8;
    width: 28px;
    padding-left: 6px;
}
.quick.wide {
    width: 38px;
}
.quick.customize {
    border-left: 1px solid #c4c4c8;
    padding-left: 9px;
}
.window-buttons {
    justify-self: end;
    display: flex;
    align-items: center;
    gap: 16px;
}

/* tabs */
.tabs {
    display: flex;
    align-items: flex-end;
    height: 29px;
    padding: 0 4px;
}
.tab {
    height: 24px;
    min-width: 61px;
    padding: 0 12px;
    font-size: 18px;
    line-height: 20px;
    font-weight: 500;
    color: #6b6c70;
    background-color: #eeeff1;
    border-top: 1px solid #c8c9cd;
    border-right: 1px solid #dcdde0;
}
.tab.file {
    width: 63px;
    margin-right: 8px;
    border-left: 1px solid #c8c9cd;
    padding: 0 6px;
}
.tab.file + .tab {
    border-left: 1px solid #c8c9cd;
}
.tab .caret {
    margin-left: 4px;
    vertical-align: middle;
}
.tab.active {
    height: 29px;
    line-height: 26px;
    margin-bottom: -1px;
    color: #333;
    font-weight: bold;
    background-color: #fbfbfd;
    border-left: 1px solid #c8c9cd;
    z-index: 1;
}
.tab-tools {
    margin: 0 4px 10px auto;
    display: flex;
    align-items: center;
    gap: 10px;
}
.tab-tools button {
    display: flex;
    align-items: center;
    gap: 8px;
}

/* ribbon */
.ribbon {
    display: grid;
    grid-template-columns: 115px 255px 113px 51px 205px 265px 1fr;
    height: 106px;
    margin: 0 4px;
    border: 1px solid #c8c9cd;
}
.group {
    display: flex;
    flex-direction: column;
    border-right: 1px solid #dcdde0;
}
.group:last-child {
    border-right: none;
}
.tools {
    flex: 1;
    display: grid;
    grid-template-rows: repeat(3, 26px);
    grid-auto-flow: column;
    grid-auto-columns: 124px;
    align-items: center;
    align-content: center;
    padding: 0 0 2px 3px;
}
.tools.geometry {
    grid-auto-columns: 106px;
}
.tool {
    justify-self: start;
    display: flex;
    align-items: center;
    height: 22px;
    padding: 0 4px;
    line-height: 20px;
}
.tool .icon {
    margin-right: 5px;
    color: #555;
}
.tool .caret {
    margin-left: 8px;
}
.tool.pressed {
    background: linear-gradient(#bcbcbc, #d4d4d4);
    border: 1px solid #a4a4a6;
    border-top-color: #888;
    padding: 0 3px;
}
.tool:disabled, .big-tool:disabled {
    color: #a6a6aa;
}
.tool:disabled .caret {
    border-top-color: #999;
}
.tool:disabled .icon {
    color: #aaa;
}
.big-tools {
    flex: 1;
    display: flex;
    justify-content: center;
}
.big-tools.study {
    justify-content: flex-start;
    padding-left: 3px;
}
.study .tools {
    flex: none;
    width: 134px;
    padding-left: 0;
}
.big-tool {
    display: flex;
    flex-direction: column;
    align-items: center;
    width: 58px;
    padding-top: 4px;
    line-height: 16px;
}
.study .big-tool:disabled {
    width: 64px;
}
.big-tool svg {
    margin-bottom: 7px;
}
.big-tool span + .caret {
    margin-top: 4px;
}
.big-tool span .caret {
    margin-left: 7px;
    vertical-align: middle;
}
.tol-text {
    font-family: "Liberation Sans", Arial, sans-serif;
    font-size: 15px;
    font-weight: bold;
    fill: #222;
}
.group-name {
    display: flex;
    align-items: center;
    justify-content: center;
    gap: 6px;
    height: 26px;
    line-height: 22px;
    padding-bottom: 2px;
    background-color: #eeeff1;
    border-top: 1px solid #c8c9cd;
}

/* workspace */
.workspace {
    position: relative;
    flex: 1;
    display: flex;
    min-height: 0;
    padding-right: 4px;
}
.navigator {
    width: 495px;
    display: flex;
    flex-direction: column;
    padding: 12px 5px 12px 4px;
}
.nav-tabs {
    display: flex;
    height: 30px;
}
.nav-tab {
    display: flex;
    align-items: center;
    justify-content: center;
    width: 30px;
    background-color: #eeeff1;
    border: 1px solid #c8c9cd;
    border-left: none;
    border-bottom: none;
}
.nav-tab.active {
    background-color: #fbfbfd;
    border-left: 1px solid #c8c9cd;
    height: 31px;
    z-index: 1;
}
.nav-panel {
    flex: 1;
    border: 1px solid #c8c9cd;
    border-right-width: 2px;
    border-bottom-width: 2px;
}
.nav-panel h2 {
    height: 29px;
    padding-left: 21px;
    font-size: 16px;
    line-height: 26px;
    color: #505054;
    border-bottom: 1px solid #c8c9cd;
}
.tree {
    list-style: none;
    font-family: "Open Sans", sans-serif;
    color: #505054;
}
.tree li {
    display: flex;
    align-items: center;
    height: 22px;
    padding-left: 23px;
}
.tree li .icon {
    margin-right: 4px;
}
.tree li.root {
    padding-left: 4px;
}
.tree li.closed {
    padding-left: 9px;
}
.tree li.closed::before {
    content: "";
    border: 5px solid transparent;
    border-left: 7px solid #888;
    border-right: none;
    margin-right: 7px;
}
.star {
    width: 8px;
    height: 8px;
    align-self: flex-start;
    margin: 3px 2px 0 -1px;
}

/* graphics area */
.graphics {
    position: relative;
    flex: 1;
    background: linear-gradient(#9a988a, #e1dfd3);
}
.model {
    position: absolute;
    left: 245px;
    top: 42px;
    width: 300px;
    height: 700px;
}
.datum {
    fill: none;
    stroke: #a9753c;
}
.datum-name {
    font-family: "Liberation Mono", monospace;
    font-size: 14px;
    fill: #b0743c;
}
.view-bar {
    position: absolute;
    left: 567px;
    top: 7px;
    display: flex;
    padding: 0 5px;
    background-color: #eeeff1;
    border: 1px solid #c8c9cd;
}
.view-bar button {
    position: relative;
    display: flex;
    align-items: center;
    justify-content: center;
    width: 27px;
    height: 26px;
    background-color: #fff;
    border-left: 1px solid #d8d8dc;
}
.view-bar svg {
    width: 17px;
    height: 17px;
}
.more::after {
    content: "";
    position: absolute;
    right: 1px;
    bottom: 3px;
    border: 2px solid #555;
    border-top-color: transparent;
    border-left-color: transparent;
}
.tolerance {
    position: absolute;
    right: 13px;
    bottom: 6px;
    font-family: "Liberation Mono", monospace;
    font-size: 13px;
    line-height: 14px;
    text-align: center;
    color: #111;
}
.tolerance p + p {
    padding-left: 26px;
}

/* analysis dialog */
.dialog {
    position: absolute;
    left: 236px;
    top: 6px;
    width: 392px;
    height: 710px;
    display: flex;
    flex-direction: column;
    padding: 3px;
    background-color: #eeeff1;
    border: 1px solid #8e8e90;
    box-shadow: inset 0 0 0 3px #c4c4c8;
    font-family: "Liberation Mono", "Noto Sans CJK SC", monospace;
    font-size: 13px;
    color: #505054;
}
.han {
    font-family: "Noto Sans CJK SC", sans-serif;
    font-size: 16px;
}
.dialog-title {
    display: flex;
    align-items: center;
    height: 21px;
    padding: 0 7px;
    font-size: 15px;
    font-weight: bold;
    background: linear-gradient(#fafafa, #dfdfe2);
    border-bottom: 1px solid #c4c4c8;
}
.dialog-title span {
    flex: 1;
    padding-right: 11px;
    text-align: center;
}
.dialog-menu {
    display: flex;
    align-items: center;
    gap: 17px;
    height: 36px;
    padding-left: 8px;
    font-family: "Open Sans", sans-serif;
    font-size: 17px;
    font-weight: bold;
    line-height: 20px;
    color: #6b6c70;
}
.section-title {
    display: flex;
    align-items: center;
    height: 18px;
    padding-left: 4px;
    line-height: 16px;
    background-color: #dfe2e3;
    border-top: 1px solid #c8c9cd;
}
.section-title.second {
    height: 24px;
    border-top: none;
}
.fold {
    border: 6px solid transparent;
    border-top: 7px solid #444;
    border-bottom: none;
    margin-right: 6px;
}
.elements {
    display: flex;
    flex-direction: column;
    height: 225px;
    padding: 1px;
    background-color: #fff;
    border: 1px solid #a4a4a8;
}
.elements table {
    flex: 1;
    width: 100%;
    border-collapse: collapse;
    display: grid;
    grid-template-rows: auto 1fr;
}
.elements thead, .elements tbody {
    display: flex;
    flex-direction: column;
}
.elements tr, .scrollbars {
    display: grid;
    grid-template-columns: 247px 1fr;
}
.elements tr.rest {
    flex: 1;
}
.elements th {
    height: 20px;
    padding: 0;
    font-size: 15px;
    line-height: 20px;
    background: linear-gradient(#fff, #ececee);
    border-bottom: 1px solid #d0d0d4;
}
.elements td {
    display: flex;
    align-items: center;
    height: 18px;
    padding: 0 0 0 2px;
}
.elements td:first-child {
    padding-left: 22px;
}
.elements td.top {
    padding-left: 2px;
}
.elements .rest td {
    height: auto;
}
.elements td + td, .elements th + th {
    border-left: 1px solid #d8d8dc;
}
.elements td svg {
    width: 12px;
    height: 12px;
    margin-right: 1px;
}
mark {
    color: #24415c;
    background-color: #aadcf4;
    line-height: 17px;
    padding: 0 1px 0 0;
}
mark.long {
    padding-right: 9px;
}
.scroll {
    display: flex;
    align-items: center;
    height: 17px;
    background-color: #eeeff1;
    border-top: 1px solid #d8d8dc;
}
.scroll .arrow {
    width: 16px;
    display: flex;
    justify-content: center;
}
.arrow::before {
    content: "";
    border: 4px solid transparent;
}
.arrow.left::before {
    border-right: 5px solid #333;
    border-left: none;
}
.arrow.right::before {
    border-left: 5px solid #333;
    border-right: none;
}
.off .arrow::before {
    opacity: 0.3;
}
.track {
    flex: 1;
    height: 16px;
    border: 1px solid #d0d0d4;
    border-width: 0 1px;
}
.off .track {
    background-color: #fff;
}
.thumb {
    display: block;
    width: 76px;
    height: 15px;
    background:
        repeating-linear-gradient(90deg, #aaa 0 1px, transparent 1px 3px) center / 11px 7px no-repeat,
        linear-gradient(#fff, #ececee);
    border: 1px solid #bcbcc0;
}
.dialog-body {
    flex: 1;
    padding: 4px 1px 0;
    margin: 2px 2px 0;
    background-color: #fbfbfd;
}
.dialog-body fieldset {
    border: 1px solid #c4c4c8;
    min-width: 0;
}
.dialog-body legend {
    margin-left: 13px;
    padding: 0 4px;
    font-size: 15px;
    line-height: 16px;
    font-weight: bold;
    color: #3c3c3e;
}
.dialog-body legend.wide {
    padding-right: 32px;
}
.name-box {
    height: 54px;
    margin-bottom: 6px;
}
.type-box {
    height: 49px;
    margin-bottom: 6px;
}
.dialog-body .regen-box {
    height: 66px;
    display: grid;
    grid-template-columns: 182px 1fr;
    grid-auto-rows: 18px;
}
.name-box input {
    display: block;
    width: calc(100% - 14px);
    height: 23px;
    margin: 4px 7px 0;
    padding: 0 3px;
    font: inherit;
    color: #3c3c3e;
    background-color: #fff;
    border: 1px solid #a8a8ac;
    outline: none;
}
.name-box input::selection {
    color: #fff;
    background-color: #3f3f41;
}
.option {
    display: flex;
    align-items: center;
    height: 20px;
    padding-left: 10px;
}
.option span {
    flex: 1;
    padding-right: 22px;
    text-align: center;
}
.option input {
    appearance: none;
    width: 13px;
    height: 13px;
    margin: 0 7px 0 0;
    border: 1px solid #909094;
    border-radius: 50%;
    background-color: #fff;
}
.option input:checked {
    background: radial-gradient(circle, #333 0 3px, #fff 4px);
}
.dialog-footer {
    height: 64px;
    padding-top: 5px;
    border-top: 1px solid #c8c9cd;
    font-family: "Noto Sans CJK SC", sans-serif;
    font-size: 16px;
    line-height: 20px;
}
.btn {
    display: flex;
    align-items: center;
    justify-content: center;
    background: linear-gradient(#fff, #ececee);
    border: 1px solid #bcbcc0;
    border-radius: 2px;
}
.btn:disabled {
    color: #9a9a9e;
    background: #eeeff1;
    border-color: #d8d8dc;
}
.steps {
    display: flex;
    justify-content: space-between;
    padding: 0 45px;
}
.steps .btn {
    width: 80px;
    height: 23px;
}
.steps .next {
    padding-left: 10px;
    font-weight: 500;
    background: linear-gradient(#b4e0fa, #88ccf4);
    border-color: #8cc4e8;
}
.actions {
    display: flex;
    gap: 3px;
    padding: 4px 0 0 14px;
}
.actions .btn {
    width: 79px;
    height: 28px;
}
.actions .apart {
    margin-left: 6px;
}

/* status bar */
.statusbar {
    display: flex;
    align-items: flex-end;
    gap: 5px;
    height: 49px;
    padding: 0 18px 4px 7px;
    background-color: #eeeff1;
    border-top: 2px solid #949496;
}
.status-icon {
    display: flex;
    align-items: center;
    justify-content: center;
    width: 21px;
    height: 21px;
    background-color: #fff;
    border: 1px solid #c4c4c8;
}
.status-icon.on {
    background-color: #dfe1e6;
    border-color: #909094;
}
.sep {
    width: 1px;
    height: 24px;
    margin-left: 4px;
    background-color: #d0d0d4;
}
.status-right {
    display: flex;
    align-items: flex-end;
    margin-left: auto;
}
.status-right .sep {
    margin-left: 2px;
}
.status-right .gap {
    margin-left: 35px;
}
.lights {
    display: flex;
    align-items: center;
    gap: 3px;
    height: 21px;
    margin-left: 4px;
}
.lights i {
    width: 5px;
    height: 5px;
    border-radius: 50%;
    background-color: #d8d8dc;
}
.lights i:first-child {
    width: 10px;
    height: 10px;
    background-color: #b4b4b8;
}
.find {
    width: 40px;
    height: 22px;
    margin-left: 4px;
}
.filter {
    width: 226px;
    height: 22px;
    margin-left: 97px;
    appearance: none;
    border: 1px solid #bcbcc0;
    background:
        linear-gradient(to top right, transparent 50%, #444 50%) right 7px center / 4px 5px no-repeat,
        linear-gradient(to top left, transparent 50%, #444 50%) right 3px center / 4px 5px no-repeat,
        linear-gradient(#bcbcc0, #bcbcc0) right 13px top / 1px 100% no-repeat,
        linear-gradient(#fff, #f0f0f2);
}

/* taskbar */
.taskbar {
    display: flex;
    height: 48px;
    background: linear-gradient(90deg, #1c3568, #203f88 8%, #1f3f88 60%, #24509c 80%, #1c3c74 86%, #2a508c);
    border-top: 1px solid #32485c;
}
.task {
    display: flex;
    align-items: center;
    justify-content: center;
    width: 70px;
    padding: 0 2px;
}
.task.start {
    width: 66px;
    justify-content: flex-start;
    padding-left: 11px;
    margin-right: 4px;
}
.task.open {
    width: 66px;
    margin: 1px 2px;
    background: linear-gradient(120deg, #8c9ac4, #3c549c 50%, #30488c);
    border: 1px solid #a4b0d0;
    border-radius: 3px;
}
.tray {
    position: relative;
    display: flex;
    align-items: center;
    gap: 12px;
    margin-left: auto;
    color: #fff;
}
.tray .up {
    margin-right: 6px;
}
.clock {
    display: flex;
    flex-direction: column;
    align-items: center;
    width: 96px;
    font-family: "Open Sans", sans-serif;
    font-size: 15px;
    line-height: 22px;
}
.watermark {
    position: absolute;
    right: 4px;
    bottom: 2px;
    font-size: 18px;
    line-height: 22px;
    font-weight: bold;
    white-space: nowrap;
    -webkit-text-stroke: 3px #e04444;
    paint-order: stroke fill;
}
.show-desktop {
    width: 14px;
    border: 1px solid #8498b8;
    background: linear-gradient(#5c7098, #24386c);
}
```
